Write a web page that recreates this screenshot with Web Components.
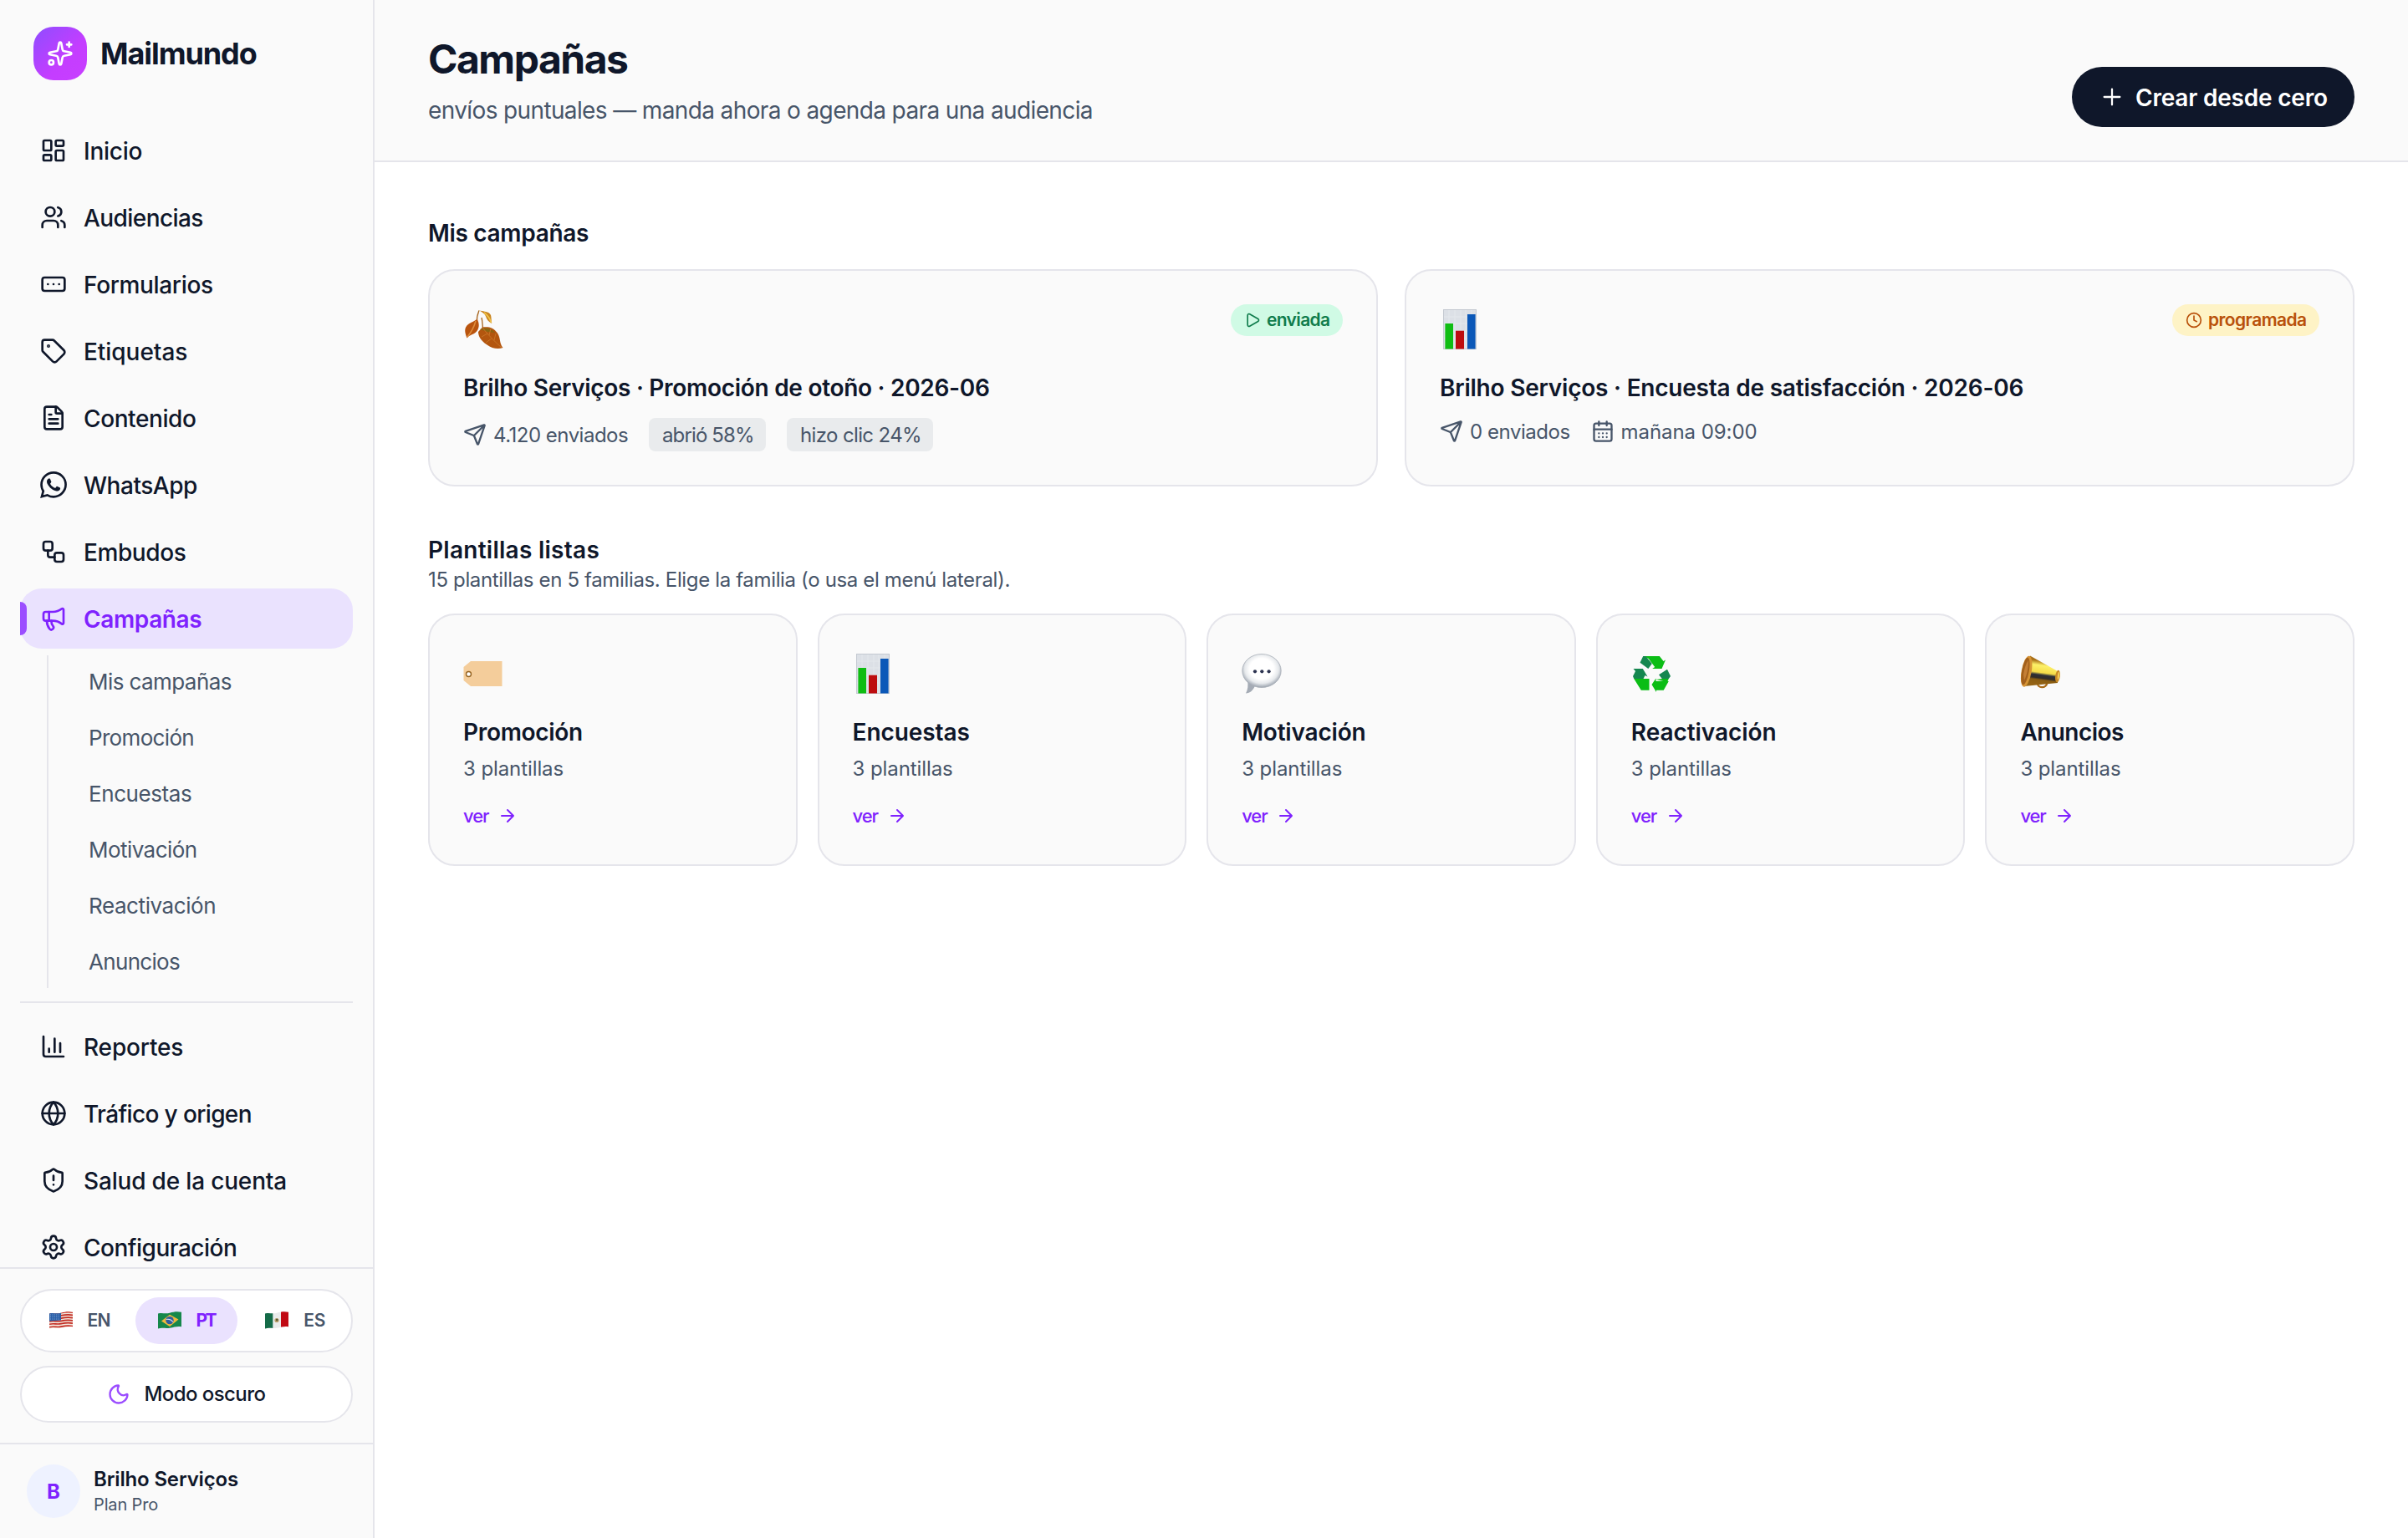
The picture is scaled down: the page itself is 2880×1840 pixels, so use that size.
<!DOCTYPE html>
<html lang="es">
<head>
<meta charset="utf-8">
<title>Mailmundo · Campañas</title>
<style>
  html, body { margin: 0; height: 100%; background: #fff; }
  body { font-family: Inter, "Liberation Sans", sans-serif; font-size: 28px; color: #0f172a;
    --line: #e5e5eb; --surface: #fafafa; --muted: #475569; --accent: #7f22fe; --accent-soft: #eae2fe; --accent-bright: #9b4dff; }
</style>
</head>
<body>
<mail-app></mail-app>
<script>
const ICONS = {
  sparkles: '<path d="M11.017 2.814a1 1 0 0 1 1.966 0l1.051 5.558a2 2 0 0 0 1.594 1.594l5.558 1.051a1 1 0 0 1 0 1.966l-5.558 1.051a2 2 0 0 0-1.594 1.594l-1.051 5.558a1 1 0 0 1-1.966 0l-1.051-5.558a2 2 0 0 0-1.594-1.594l-5.558-1.051a1 1 0 0 1 0-1.966l5.558-1.051a2 2 0 0 0 1.594-1.594z"/><path d="M20 2v4M22 4h-4"/><circle cx="4" cy="20" r="2"/>',
  dashboard: '<rect width="7" height="9" x="3" y="3" rx="1"/><rect width="7" height="5" x="14" y="3" rx="1"/><rect width="7" height="9" x="14" y="12" rx="1"/><rect width="7" height="5" x="3" y="16" rx="1"/>',
  users: '<path d="M16 21v-2a4 4 0 0 0-4-4H6a4 4 0 0 0-4 4v2"/><path d="M16 3.128a4 4 0 0 1 0 7.744"/><path d="M22 21v-2a4 4 0 0 0-3-3.87"/><circle cx="9" cy="7" r="4"/>',
  form: '<rect width="20" height="12" x="2" y="6" rx="2"/><path d="M12 12h.01M17 12h.01M7 12h.01"/>',
  tag: '<path d="M12.586 2.586A2 2 0 0 0 11.172 2H4a2 2 0 0 0-2 2v7.172a2 2 0 0 0 .586 1.414l8.704 8.704a2.426 2.426 0 0 0 3.42 0l6.58-6.58a2.426 2.426 0 0 0 0-3.42z"/><circle cx="7.5" cy="7.5" r=".5" fill="currentColor"/>',
  file: '<path d="M6 22a2 2 0 0 1-2-2V4a2 2 0 0 1 2-2h8a2.4 2.4 0 0 1 1.704.706l3.588 3.588A2.4 2.4 0 0 1 20 8v12a2 2 0 0 1-2 2z"/><path d="M14 2v5a1 1 0 0 0 1 1h5M10 9H8M16 13H8M16 17H8"/>',
  whatsapp: '<path stroke="none" fill="currentColor" d="M17.472 14.382c-.297-.149-1.758-.867-2.03-.967-.273-.099-.471-.148-.67.15-.197.297-.767.966-.94 1.164-.173.199-.347.223-.644.075-.297-.15-1.255-.463-2.39-1.475-.883-.788-1.48-1.761-1.653-2.059-.173-.297-.018-.458.13-.606.134-.133.298-.347.446-.52.149-.174.198-.298.298-.497.099-.198.05-.371-.025-.52-.075-.149-.669-1.612-.916-2.207-.242-.579-.487-.5-.669-.51-.173-.008-.371-.01-.57-.01-.198 0-.52.074-.792.372-.272.297-1.04 1.016-1.04 2.479 0 1.462 1.065 2.875 1.213 3.074.149.198 2.096 3.2 5.077 4.487.709.306 1.262.489 1.694.625.712.227 1.36.195 1.871.118.571-.085 1.758-.719 2.006-1.413.248-.694.248-1.289.173-1.413-.074-.124-.272-.198-.57-.347m-5.421 7.403h-.004a9.87 9.87 0 01-5.031-1.378l-.361-.214-3.741.982.998-3.648-.235-.374a9.86 9.86 0 01-1.51-5.26c.001-5.45 4.436-9.884 9.888-9.884 2.64 0 5.122 1.03 6.988 2.898a9.825 9.825 0 012.893 6.994c-.003 5.45-4.437 9.884-9.885 9.884m8.413-18.297A11.815 11.815 0 0012.05 0C5.495 0 .16 5.335.157 11.892c0 2.096.547 4.142 1.588 5.945L.057 24l6.305-1.654a11.882 11.882 0 005.683 1.448h.005c6.554 0 11.89-5.335 11.893-11.893a11.821 11.821 0 00-3.48-8.413Z"/>',
  workflow: '<rect width="8" height="8" x="3" y="3" rx="2"/><path d="M7 11v4a2 2 0 0 0 2 2h4"/><rect width="8" height="8" x="13" y="13" rx="2"/>',
  megaphone: '<path d="M11 6a13 13 0 0 0 8.4-2.8A1 1 0 0 1 21 4v12a1 1 0 0 1-1.6.8A13 13 0 0 0 11 14H5a2 2 0 0 1-2-2V8a2 2 0 0 1 2-2z"/><path d="M6 14a12 12 0 0 0 2.4 7.2 2 2 0 0 0 3.2-2.4A8 8 0 0 1 10 14M8 6v8"/>',
  chart: '<path d="M3 3v16a2 2 0 0 0 2 2h16M18 17V9M13 17V5M8 17v-3"/>',
  globe: '<circle cx="12" cy="12" r="10"/><path d="M12 2a14.5 14.5 0 0 0 0 20 14.5 14.5 0 0 0 0-20M2 12h20"/>',
  shield: '<path d="M20 13c0 5-3.5 7.5-7.66 8.95a1 1 0 0 1-.67-.01C7.5 20.5 4 18 4 13V6a1 1 0 0 1 1-1c2 0 4.5-1.2 6.24-2.72a1.17 1.17 0 0 1 1.52 0C14.51 3.81 17 5 19 5a1 1 0 0 1 1 1z"/><path d="M12 8v4M12 16h.01"/>',
  settings: '<path d="M9.671 4.136a2.34 2.34 0 0 1 4.659 0 2.34 2.34 0 0 0 3.319 1.915 2.34 2.34 0 0 1 2.33 4.033 2.34 2.34 0 0 0 0 3.831 2.34 2.34 0 0 1-2.33 4.033 2.34 2.34 0 0 0-3.319 1.915 2.34 2.34 0 0 1-4.659 0 2.34 2.34 0 0 0-3.32-1.915 2.34 2.34 0 0 1-2.33-4.033 2.34 2.34 0 0 0 0-3.831A2.34 2.34 0 0 1 6.35 6.051a2.34 2.34 0 0 0 3.319-1.915"/><circle cx="12" cy="12" r="3"/>',
  moon: '<path d="M20.985 12.486a9 9 0 1 1-9.473-9.472c.405-.022.617.46.402.803a6 6 0 0 0 8.268 8.268c.344-.215.825-.004.803.401"/>',
  plus: '<path d="M5 12h14M12 5v14"/>',
  play: '<path d="M5 5a2 2 0 0 1 3.008-1.728l11.997 6.998a2 2 0 0 1 .003 3.458l-12 7A2 2 0 0 1 5 19z"/>',
  clock: '<circle cx="12" cy="12" r="10"/><path d="M12 6v6l4 2"/>',
  send: '<path d="M14.536 21.686a.5.5 0 0 0 .937-.024l6.5-19a.496.496 0 0 0-.635-.635l-19 6.5a.5.5 0 0 0-.024.937l7.93 3.18a2 2 0 0 1 1.112 1.11zM21.854 2.147l-10.94 10.939"/>',
  calendar: '<path d="M8 2v4M16 2v4"/><rect width="18" height="18" x="3" y="4" rx="2"/><path d="M3 10h18M8 14h.01M12 14h.01M16 14h.01M8 18h.01M12 18h.01M16 18h.01"/>',
  arrow: '<path d="M5 12h14M12 5l7 7-7 7"/>'
};

const PICTOS = {
  leaves: ['0 0 48 48', '<path d="M19 1.500c-1.500 4-3 7-2.500 12M22 10c1 4 1 8 1.500 13" stroke="#a5631c" stroke-width="1.300" fill="none"/><path d="M18 1c6 2 13 1 15 6 .8 3 .5 6 1.200 10-4-2-6-5-7-8-1-3-4-6-9-8z" fill="#c98420"/><path d="M25 4c4 3 7 7 8.500 12" stroke="#f0c34a" stroke-width="1.600" fill="none"/><path d="M16.500 11.500c3 5 3.500 12-2 16.500-4 3-7 2.500-10 6.500C1.500 27 1 22 6 18c4-3 7-3 10.500-6.500z" fill="#b9540e"/><path d="M15 14c-2 7-5 13-10 19" stroke="#dd8c3c" stroke-width="1.600" fill="none"/><path d="M23 21.500c7-1 13 0 18 7 4 6 2 12 6.500 17.500-6 2-13 1-19-3.500C20 37 18 31 18 27z" fill="#b3560f"/><path d="M20 24c7-3 14-1 18 4l-9-1z" fill="#8a6512"/><path d="M23.500 22.500C30 31 37 38 46 46M29 29l-7 4M34 35l-7 5M31 31l2-8M37 37l2-8" stroke="#c87426" stroke-width="1" fill="none"/>'],
  bars: ['0 0 48 48', '<rect x="4" width="40" height="48" fill="#dce0e6"/><path d="M4 9h40M4 17h40M4 26h40M4 35h40M11 0v48M18 0v48M25 0v48M31 0v48M38 0v48" stroke="#e4e8ec" stroke-width="1"/><rect x="4.500" y=".5" width="39" height="47" fill="none" stroke="#c4c9d1"/><path fill="#0fbd12" d="M6.400 17H16v30.500H6.400z"/><path fill="#bd0d0f" d="M19 25.700h10v21.800H19z"/><path fill="#0b58b8" d="M33 6h9.600v41.500H33z"/>'],
  label: ['0 0 48 48', '<path d="M9 9h37.500v30H9L.5 32V16z" fill="#f4cd9b"/><circle cx="6.500" cy="24.500" r="3" fill="#fff" stroke="#94621f" stroke-width="1.400"/>'],
  speech: ['0 0 48 48', '<defs><radialGradient id="g" cx=".5" cy=".44" r=".56"><stop offset=".55" stop-color="#fff"/><stop offset=".78" stop-color="#e6e9ec"/><stop offset="1" stop-color="#9aa2ad"/></radialGradient></defs><path d="M7 32c1 6 .5 11-2 15.500 5 0 9-4 11-9z" fill="#a4abb5"/><ellipse cx="24" cy="20.500" rx="23.200" ry="20" fill="url(#g)" stroke="#a8aeb7" stroke-width=".8"/><g fill="#2c3350"><circle cx="16" cy="21.300" r="2.100"/><circle cx="24.300" cy="21.300" r="2.100"/><circle cx="32.600" cy="21.300" r="2.100"/></g>'],
  recycle: ['0 0 48 48', '<path fill="#0bbd15" d="M14.200 3h19.600l4.700 6 2.500-1.500L36.500 18H25.200l3-2-7.500-10zM3.200 30h18.300v13.700h-9.700zM24.500 37l5-7.500V33h15.300l-6.100 10.700H30V46zM29.500 31l8-1h7.300L43 34z"/><path fill="#15874f" d="M10.500 10.700 14.200 3h3l7.600 9-4.500 6zM2.500 18h11.300l5.700 9.500-3-1.500-2 4H3.200L2 27l3-6zM33 25.300l10-6.600 4 8.300-2.200 3h-8z"/>'],
  horn: ['0 0 48 48', '<defs><linearGradient id="h" x1=".25" y1="0" x2=".1" y2="1"><stop offset=".12" stop-color="#a86f17"/><stop offset=".27" stop-color="#fdf169"/><stop offset=".5" stop-color="#f5dc48"/><stop offset=".58" stop-color="#2d2f38"/><stop offset=".68" stop-color="#332d26"/><stop offset=".74" stop-color="#8a5d12"/><stop offset="1" stop-color="#9a6615"/></linearGradient></defs><path d="M20.500 34.500c0 7 11 8 12 0" fill="none" stroke="#a96a18" stroke-width="2.200"/><path d="M12 2.500 45 21v14L5 39z" fill="url(#h)"/><ellipse cx="45" cy="27" rx="2.800" ry="7.300" transform="rotate(8 45 27)" fill="#c98a25"/><ellipse cx="46" cy="26.500" rx="1.100" ry="4.500" transform="rotate(8 46 26.500)" fill="#f2ce59"/><ellipse cx="7.700" cy="21.200" rx="6" ry="18.800" transform="rotate(10 7.700 21.200)" fill="#d59335"/><ellipse cx="6.400" cy="21" rx="4.300" ry="16.500" transform="rotate(10 6.400 21)" fill="#a3601c"/><path d="M4 25c1-7 3-13 6-17 0 7-1 16-5 24z" fill="#c47f36"/>'],
  us: ['0 0 28 21', '<clipPath id="c"><path d="M0 2.500c5-1.500 8 .7 14-.8C19 .3 23-.3 28 .8v17.500c-5-1-8 .4-14 1.500-5 1-9-.8-14 .7z"/></clipPath><g clip-path="url(#c)"><path fill="#f3e6dc" d="M0 0h28v21H0z"/><path d="M0 2.300c5-1.500 9 .5 14-.6s9-1.500 14-.5M0 5.500c5-1.500 9 .5 14-.6s9-1.500 14-.5M0 8.700c5-1.500 9 .5 14-.6s9-1.500 14-.5M0 12c5-1.500 9 .5 14-.6s9-1.500 14-.5M0 15.300c5-1.500 9 .5 14-.6s9-1.500 14-.5M0 18.800c5-1.500 9 .5 14-.6s9-1.500 14-.5" stroke="#c22b22" stroke-width="1.700" fill="none"/><path fill="#2a5fa8" d="M0 0h14v10.500L0 11.500z"/><path d="M1 4h12M1 6.500h12M1 9h12" stroke="#9db8dc" stroke-width=".9" stroke-dasharray="1 1.400"/></g>'],
  br: ['0 0 28 21', '<path fill="#16874b" d="M0 2.500c5-1.500 8 .7 14-.8C19 .3 23-.3 28 .8v17.500c-5-1-8 .4-14 1.500-5 1-9-.8-14 .7z"/><path fill="#f0b93c" d="m4 11.500 10-7.800L24.500 9.500 14 18z"/><circle cx="14" cy="10.600" r="4.700" fill="#2f5d9e"/><path d="M9.800 9.500c3-.8 6 .3 8.200 3" stroke="#dce6ee" stroke-width="1.100" fill="none"/>'],
  mx: ['0 0 28 21', '<clipPath id="c"><path d="M0 2.500c5-1.500 8 .7 14-.8C19 .3 23-.3 28 .8v17.500c-5-1-8 .4-14 1.500-5 1-9-.8-14 .7z"/></clipPath><g clip-path="url(#c)"><path fill="#e9ebeb" d="M0 0h28v21H0z"/><path fill="#146b48" d="M0 0h9.300v21H0z"/><path fill="#c10a14" d="M19 0h9v21h-9z"/><circle cx="14" cy="10.500" r="2.600" fill="#b79c68"/><circle cx="14.200" cy="10" r="1.200" fill="#4b4f2c"/></g>']
};

function define(name, render) {
  customElements.define(name, class extends HTMLElement {
    connectedCallback() {
      if (this.shadowRoot) return;
      this.attachShadow({ mode: 'open' }).innerHTML = render(this);
    }
  });
}

/* Stroke icon on a 24-unit grid. */
define('ui-icon', el => {
  const s = el.getAttribute('size') || 32;
  return `<style>:host{display:block;flex:none;width:${s}px;height:${s}px}svg{display:block}</style>
  <svg width="${s}" height="${s}" viewBox="0 0 24 24" fill="none" stroke="currentColor" stroke-width="${el.getAttribute('stroke') || 2}" stroke-linecap="round" stroke-linejoin="round">${ICONS[el.getAttribute('name')]}</svg>`;
});

/* Full-colour pictogram. */
define('ui-picto', el => {
  const [box, art] = PICTOS[el.getAttribute('name')];
  const [, , w, h] = box.split(' ');
  return `<style>:host{display:block;flex:none;width:${w}px;height:${h}px}svg{display:block}</style><svg width="${w}" height="${h}" viewBox="${box}">${art}</svg>`;
});

/* One line of text, tracked so that its last glyph ends at the measure given in "w". */
const pen = document.createElement('canvas').getContext('2d');
customElements.define('ui-text', class extends HTMLElement {
  connectedCallback() {
    if (this.shadowRoot) return;
    this.attachShadow({ mode: 'open' }).innerHTML = '<style>:host{display:block;white-space:nowrap}</style><slot></slot>';
    const w = parseFloat(this.getAttribute('w'));
    if (!w) return;
    const cs = getComputedStyle(this);
    pen.font = `${cs.fontWeight} ${cs.fontSize} ${cs.fontFamily}`;
    const text = this.textContent;
    const gap = (w - pen.measureText(text).actualBoundingBoxRight) / (text.length - 1);
    this.style.letterSpacing = gap.toFixed(3) + 'px';
    this.style.width = w + 'px';
  }
});

define('nav-item', el => `<style>
  :host{display:flex;align-items:center;gap:20px;height:72px;padding-left:24px;border-radius:26px;font-weight:500;position:relative;flex:none}
  :host([active]){background:var(--accent-soft);color:var(--accent);font-weight:600}
  :host([active])::before{content:"";position:absolute;left:0;top:16px;width:8px;height:40px;border-radius:0 8px 8px 0;background:var(--accent-bright)}
  ui-text{padding-top:1px}
  </style><ui-icon name="${el.getAttribute('icon')}"></ui-icon><ui-text w="${el.getAttribute('w')}">${el.getAttribute('label')}</ui-text>`);

define('sub-nav', () => `<style>
  :host{display:flex;flex-direction:column;gap:4px;margin:0 0 16px 32px;border-left:2px solid var(--line);padding-left:48px;font-size:26px;color:var(--muted)}
  ui-text{line-height:64px;height:63px}
  </style>
  <ui-text w="170.700">Mis campañas</ui-text><ui-text w="125.300">Promoción</ui-text><ui-text w="123">Encuestas</ui-text>
  <ui-text w="128.700">Motivación</ui-text><ui-text w="151.300">Reactivación</ui-text><ui-text w="109">Anuncios</ui-text>`);

define('lang-option', el => `<style>
  :host{flex:1;display:flex;align-items:center;justify-content:center;gap:18px;height:56px;border-radius:28px;font-size:21px;font-weight:600;color:var(--muted)}
  :host([active]){background:var(--accent-soft);color:var(--accent);font-weight:700}
  :host(:not(:first-child)){text-indent:0;padding-left:2px;margin-right:-2px}
  :host([active]){margin-right:0;padding-left:2px;box-sizing:border-box}
  ui-picto{margin-top:-2px} ui-text{line-height:55px;height:56px}
  </style><ui-picto name="${el.getAttribute('flag')}"></ui-picto><ui-text w="${el.getAttribute('w')}">${el.getAttribute('label')}</ui-text>`);

define('side-bar', () => `<style>
  :host{display:flex;flex-direction:column;box-sizing:border-box;width:448px;height:1840px;flex:none;background:var(--surface);border-right:2px solid var(--line)}
  .brand{display:flex;align-items:center;gap:16px;padding:32px 40px 48px;font-size:36px;font-weight:700}
  .logo{display:flex;align-items:center;justify-content:center;width:64px;height:64px;border-radius:24px;color:#fff;background:linear-gradient(135deg,#8e4dff 0%,#c43dff 60%,#c83eff 100%)}
  nav{flex:1;min-height:0;overflow:hidden;display:flex;flex-direction:column;gap:8px;padding:0 24px}
  hr{flex:none;width:100%;height:2px;border:0;margin:-8px 0 8px;background:var(--line)}
  .prefs{display:flex;flex-direction:column;gap:16px;padding:24px;border-top:2px solid var(--line)}
  .lang{display:grid;grid-template-columns:repeat(3,1fr);gap:6px;padding:8px;border:2px solid var(--line);border-radius:38px;background:#fff}
  .mode{display:flex;align-items:center;justify-content:center;gap:17px;height:64px;border:2px solid var(--line);border-radius:34px;background:#fff;font-size:24px;font-weight:500}
  .mode ui-icon{color:var(--accent-bright)}
  .mode ui-text{margin-right:1px;padding-bottom:1px}
  .user{display:flex;align-items:center;gap:16px;padding:24px 32px;border-top:2px solid var(--line)}
  .avatar{display:flex;align-items:center;justify-content:center;width:64px;height:64px;border-radius:50%;background:#eef2ff;color:var(--accent);font-size:24px;font-weight:700}
  .name{font-size:24px;font-weight:600;line-height:34px}
  .plan{font-size:20px;line-height:26px;color:var(--muted);margin:0 0 2px}
  </style>
  <div class="brand"><span class="logo"><ui-icon name="sparkles"></ui-icon></span><ui-text w="186.700">Mailmundo</ui-text></div>
  <nav>
    <nav-item icon="dashboard" w="69.500" label="Inicio"></nav-item>
    <nav-item icon="users" w="142.300" label="Audiencias"></nav-item>
    <nav-item icon="form" w="154" label="Formularios"></nav-item>
    <nav-item icon="tag" w="123.300" label="Etiquetas"></nav-item>
    <nav-item icon="file" w="134" label="Contenido"></nav-item>
    <nav-item icon="whatsapp" w="135" label="WhatsApp"></nav-item>
    <nav-item icon="workflow" w="121.700" label="Embudos"></nav-item>
    <nav-item icon="megaphone" w="141.300" label="Campañas" active></nav-item>
    <sub-nav></sub-nav>
    <hr>
    <nav-item icon="chart" w="118.300" label="Reportes"></nav-item>
    <nav-item icon="globe" w="199.700" label="Tráfico y origen"></nav-item>
    <nav-item icon="shield" w="241.300" label="Salud de la cuenta"></nav-item>
    <nav-item icon="settings" w="182" label="Configuración"></nav-item>
  </nav>
  <div class="prefs">
    <div class="lang"><lang-option flag="us" w="27" label="EN"></lang-option><lang-option flag="br" w="25" label="PT" active></lang-option><lang-option flag="mx" w="25.500" label="ES"></lang-option></div>
    <div class="mode"><ui-icon name="moon" size="28"></ui-icon><ui-text w="145">Modo oscuro</ui-text></div>
  </div>
  <div class="user"><span class="avatar">B</span><div><ui-text class="name" w="173">Brilho Serviços</ui-text><ui-text class="plan" w="76.300">Plan Pro</ui-text></div></div>`);

define('page-header', () => `<style>
  :host{display:flex;justify-content:space-between;align-items:flex-end;box-sizing:border-box;height:194px;padding:0 64px 40px;background:var(--surface);border-bottom:2px solid var(--line)}
  .title{font-size:48px;font-weight:700;line-height:60px;margin-bottom:11px}
  .sub{line-height:40px;color:var(--muted)}
  .button{display:flex;align-items:center;gap:12px;height:72px;padding:0 32px;border-radius:36px;background:#0f172a;color:#fff;font-weight:600}
  .button ui-text{margin-right:1px;padding-top:1px}
  </style>
  <div><ui-text class="title" w="239">Campañas</ui-text><ui-text class="sub" w="793.800">envíos puntuales — manda ahora o agenda para una audiencia</ui-text></div>
  <div class="button"><ui-icon name="plus" stroke="1.700"></ui-icon><ui-text w="229">Crear desde cero</ui-text></div>`);

define('status-badge', el => `<style>
  :host{display:flex;align-items:center;gap:7px;height:38px;padding:0 16px;border-radius:19px;font-size:21px;font-weight:600;background:#d0fae5;color:#107c4c}
  :host([pending]){background:#fef3c6;color:#b9500a}
  ui-text{line-height:38px;height:38px}
  </style><ui-icon size="20" name="${el.getAttribute('icon')}"></ui-icon><ui-text w="${el.getAttribute('w')}">${el.getAttribute('label')}</ui-text>`);

define('campaign-card', el => `<style>
  :host{display:block;box-sizing:border-box;flex:1;height:260px;padding:40px;border:2px solid var(--line);border-radius:32px;background:var(--surface)}
  .top{display:flex;justify-content:space-between;align-items:flex-start;height:79px}
  ui-picto{margin-top:6px}
  .title{font-weight:600;line-height:42px;margin-bottom:15px}
  ::slotted(div){display:flex;align-items:center;gap:25px;font-size:24px;color:var(--muted)}
  </style>
  <div class="top"><ui-picto name="${el.getAttribute('picto')}"></ui-picto><slot name="status"></slot></div>
  <ui-text class="title" w="${el.getAttribute('w')}">${el.getAttribute('label')}</ui-text><slot></slot>`);

define('meta-item', el => `<style>:host{display:flex;align-items:center;gap:8px;height:32px}:host([chip]){height:40px;padding:0 16px;border-radius:8px;background:#e9ebed}</style>
  ${el.hasAttribute('icon') ? `<ui-icon size="28" name="${el.getAttribute('icon')}"></ui-icon>` : ''}<ui-text w="${el.getAttribute('w')}">${el.getAttribute('label')}</ui-text>`);

define('family-card', el => `<style>
  :host{display:block;box-sizing:border-box;flex:1 1 0;height:302px;padding:46px 40px 40px;border:2px solid var(--line);border-radius:32px;background:var(--surface)}
  .title{font-weight:600;line-height:42px;margin-top:25px}
  .count{font-size:24px;line-height:32px;color:var(--muted);margin:7px 0 22px}
  .more{display:flex;align-items:center;gap:9px;height:36px;font-size:22px;font-weight:500;color:var(--accent)}
  </style>
  <ui-picto name="${el.getAttribute('picto')}"></ui-picto>
  <ui-text class="title" w="${el.getAttribute('w')}">${el.getAttribute('label')}</ui-text>
  <ui-text class="count" w="119.500">3 plantillas</ui-text>
  <div class="more"><ui-text w="32">ver</ui-text><ui-icon name="arrow" size="24"></ui-icon></div>`);

define('mail-app', () => `<style>
  :host{display:flex;width:2880px;height:1840px;overflow:hidden}
  main{flex:1;display:flex;flex-direction:column;background:#fff}
  .content{padding:65px 64px 0}
  .heading{font-weight:600;line-height:40px}
  .row{display:flex;gap:32px;margin:23px 0 56px}
  .note{font-size:24px;line-height:31px;color:var(--muted)}
  .grid{display:flex;gap:24px;margin-top:25px}
  </style>
  <side-bar></side-bar>
  <main>
    <page-header></page-header>
    <div class="content">
      <ui-text class="heading" w="192">Mis campañas</ui-text>
      <div class="row">
        <campaign-card picto="leaves" w="629" label="Brilho Serviços · Promoción de otoño · 2026-06">
          <status-badge slot="status" icon="play" w="75" label="enviada"></status-badge>
          <div><meta-item icon="send" w="161" label="4.120 enviados"></meta-item><meta-item chip w="108" label="abrió 58%"></meta-item><meta-item chip w="143" label="hizo clic 24%"></meta-item></div>
        </campaign-card>
        <campaign-card picto="bars" w="697.500" label="Brilho Serviços · Encuesta de satisfacción · 2026-06">
          <status-badge slot="status" pending icon="clock" w="117" label="programada"></status-badge>
          <div><meta-item icon="send" w="119.500" label="0 enviados"></meta-item><meta-item icon="calendar" w="162" label="mañana 09:00"></meta-item></div>
        </campaign-card>
      </div>
      <ui-text class="heading" w="204.400">Plantillas listas</ui-text>
      <ui-text class="note" w="695.400">15 plantillas en 5 familias. Elige la familia (o usa el menú lateral).</ui-text>
      <div class="grid">
        <family-card picto="label" w="142" label="Promoción"></family-card>
        <family-card picto="bars" w="139.900" label="Encuestas"></family-card>
        <family-card picto="speech" w="147.300" label="Motivación"></family-card>
        <family-card picto="recycle" w="172.800" label="Reactivación"></family-card>
        <family-card picto="horn" w="123.600" label="Anuncios"></family-card>
      </div>
    </div>
  </main>`);
</script>
</body>
</html>
